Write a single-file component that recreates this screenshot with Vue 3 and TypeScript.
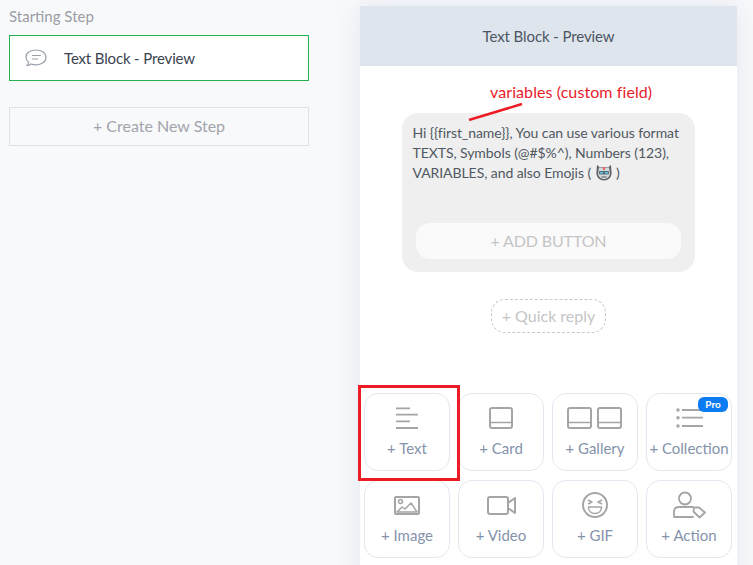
<script setup lang="ts">
interface Tile { label: string; icon: string; pro?: boolean }
const variable = '{' + '{first_name}' + '}'
const tiles: Tile[] = [
  { label: '+ Text', icon: 'text' },
  { label: '+ Card', icon: 'card' },
  { label: '+ Gallery', icon: 'gallery' },
  { label: '+ Collection', icon: 'collection', pro: true },
  { label: '+ Image', icon: 'image' },
  { label: '+ Video', icon: 'video' },
  { label: '+ GIF', icon: 'gif' },
  { label: '+ Action', icon: 'action' },
]
</script>

<template>
  <div class="page">
    <aside class="left">
      <div class="title">Starting Step</div>
      <div class="step">
        <svg class="chat" width="24" height="20" viewBox="0 0 24 20" fill="none" stroke="#9aa1ab" stroke-width="1.2">
          <path d="M3 17.5c1.5 0 3-.4 4-1.5 1.2.5 3 .8 5 .8 5.500 0 10-2.800 10-7.300S17.500 2 12 2 2 4.500 2 9c0 2.500 1 4 2.600 5.200-.2 1.400-.8 2.500-1.600 3.300z" />
          <path d="M8 7.500h9M8 11h6" />
        </svg>
        <span>Text Block - Preview</span>
      </div>
      <div class="create">+ Create New Step</div>
    </aside>
    <main class="panel">
      <div class="head">Text Block - Preview</div>
      <div class="body">
        <div class="note">variables (custom field)</div>
        <svg class="note-line" width="60" height="20" viewBox="0 0 60 20"><path d="M1 19 L54 3" stroke="#ed1c24" stroke-width="2.500" fill="none" /></svg>
        <div class="bubble">
          <p class="msg">Hi {{ variable }}, You can use various format TEXTS, Symbols (@#$%^), Numbers (123), VARIABLES, and also Emojis (
            <svg class="emoji" width="18" height="17" viewBox="0 0 18 17">
              <path d="M2 1l2.500 2h9L16 1l.6 8c0 4.500-3.400 7.500-7.600 7.500S1.400 13.500 1.400 9z" fill="#5d6268"/>
              <path d="M4 3.500h10l1 5.500c0 3.500-2.800 6-6 6s-6-2.500-6-6z" fill="#d5d9dc"/>
              <rect x="4" y="7" width="10" height="3.500" rx="1" fill="#4c6c7c"/>
              <rect x="5" y="8" width="3" height="1.600" fill="#6fc4da"/><rect x="10" y="8" width="3" height="1.600" fill="#6fc4da"/>
              <rect x="6.500" y="12.200" width="5" height="1.500" fill="#7d8388"/>
              <rect x="8" y="3" width="2" height="3" fill="#e0655a"/>
            </svg>
            )</p>
          <div class="add">+ ADD BUTTON</div>
        </div>
        <div class="quick">+ Quick reply</div>
      </div>
      <div class="grid">
        <div v-for="t in tiles" :key="t.label" class="tile">
          <span v-if="t.pro" class="pro">Pro</span>
          <svg class="icon" width="44" height="32" viewBox="0 0 44 32" fill="none" stroke="#a5a5a5" stroke-width="1.500">
            <template v-if="t.icon === 'text'">
              <path d="M11 6.300h14M11 12.700h22M11 19.300h14M11 26h22" stroke-width="1.800" />
            </template>
            <template v-else-if="t.icon === 'card'">
              <rect x="11" y="6" width="22" height="20" rx="2" stroke-width="2" /><path d="M11 20.500h22" />
            </template>
            <template v-else-if="t.icon === 'gallery'">
              <rect x="-5" y="6" width="23" height="20" rx="2" stroke-width="2" /><path d="M-5 20.500h23" />
              <rect x="25" y="6" width="23" height="20" rx="2" stroke-width="2" /><path d="M25 20.500h23" />
            </template>
            <template v-else-if="t.icon === 'collection'">
              <path d="M15 8h21M15 15.700h21M15 24h21" stroke-width="1.800" />
              <circle cx="11" cy="8" r="1.700" fill="#a5a5a5" stroke="none" /><circle cx="11" cy="15.700" r="1.700" fill="#a5a5a5" stroke="none" /><circle cx="11" cy="24" r="1.700" fill="#a5a5a5" stroke="none" />
            </template>
            <template v-else-if="t.icon === 'image'">
              <rect x="10" y="8" width="24" height="17" rx="1" stroke-width="2" />
              <circle cx="15.500" cy="12.500" r="2" /><path d="M12 23l5-5 3 2 6-6 6 9z" stroke-linejoin="round" />
            </template>
            <template v-else-if="t.icon === 'video'">
              <rect x="9" y="8" width="20" height="17" rx="2" stroke-width="2" /><path d="M29 14l7-5v15l-7-5z" stroke-width="2" stroke-linejoin="round" />
            </template>
            <template v-else-if="t.icon === 'gif'">
              <circle cx="22" cy="16" r="12" stroke-width="2" />
              <path d="M15 11l4 2-4 2M29 11l-4 2 4 2M15.500 18h13c0 4-2.800 6.500-6.500 6.500s-6.500-2.500-6.500-6.500z" stroke-linejoin="round" />
            </template>
            <template v-else>
              <circle cx="18" cy="9.500" r="6" stroke-width="1.800" />
              <path d="M7 28v-5c0-3 2-5 5-5h14M7 28h19" stroke-width="1.800" stroke-linecap="round" />
              <path d="M27 18.500h5l6 5-5.500 5-6-6z" stroke-width="1.800" stroke-linejoin="round" fill="#fff" />
            </template>
          </svg>
          <span class="lab">{{ t.label }}</span>
        </div>
      </div>
      <div class="mark"></div>
    </main>
  </div>
</template>

<style>
html, body { margin: 0; background: #f8f9fb; }
</style>

<style scoped>
.page {
  width: 753px;
  height: 565px;
  overflow: hidden;
  display: flex;
  font-family: Lato, sans-serif;
  background: #f8f9fb;
}
.left {
  width: 360px;
  box-sizing: border-box;
  padding: 8px 0 0 9px;
}
.title { font-size: 15px; line-height: 17px; color: #9b9ca5; }
.step {
  margin-top: 10px;
  width: 300px;
  height: 46px;
  box-sizing: border-box;
  border: 1px solid #22b14c;
  background: #fff;
  display: flex;
  align-items: center;
  padding-left: 14px;
  gap: 16px;
  font-size: 15px;
  letter-spacing: -0.15px;
  color: #3a4450;
}
.create {
  margin-top: 26px;
  width: 300px;
  height: 39px;
  box-sizing: border-box;
  border: 1px solid #dfe1e6;
  text-align: center;
  line-height: 36px;
  font-size: 16px;
  color: #a2a4ac;
}
.panel {
  position: relative;
  width: 377px;
  height: 600px;
  margin-top: 6px;
  background: #fff;
  box-shadow: 0 0 24px rgba(160, 170, 200, 0.24);
}
.head {
  height: 60px;
  background: #dfe5ec;
  text-align: center;
  line-height: 61px;
  font-size: 15px;
  letter-spacing: -0.1px;
  color: #4b5563;
}
.body { position: relative; height: 327px; box-sizing: border-box; padding: 47px 42px 0; }
.note { position: absolute; left: 130px; top: 16px; font-size: 16px; letter-spacing: 0.09px; line-height: 20px; color: #e8202a; }
.note-line { position: absolute; left: 108px; top: 35px; }
.bubble {
  width: 293px;
  height: 159px;
  box-sizing: border-box;
  background: #efefef;
  border-radius: 16px;
  padding: 10px 11px 13px 11px;
  display: flex;
  flex-direction: column;
  justify-content: space-between;
}
.msg { margin: 0 0 0 -0.5px; font-size: 14px; letter-spacing: -0.07px; line-height: 20px; color: #4f5862; }
.emoji { vertical-align: -3px; }
.add {
  margin: 0 3px;
  height: 36px;
  border-radius: 14px;
  background: #fafafa;
  text-align: center;
  line-height: 36px;
  font-size: 16px;
  letter-spacing: -0.15px;
  color: #c5c5c7;
}
.quick {
  margin: 27px auto 0;
  width: 115px;
  height: 34px;
  box-sizing: border-box;
  border: 1px dashed #c8c8c8;
  border-radius: 14px;
  text-align: center;
  line-height: 32px;
  font-size: 16px;
  color: #c5c5c7;
}
.grid {
  padding-left: 4px;
  display: grid;
  grid-template-columns: repeat(4, 86px);
  grid-auto-rows: 78px;
  column-gap: 8px;
  row-gap: 9px;
}
.tile {
  position: relative;
  box-sizing: border-box;
  border: 1px solid #e3e8f0;
  border-radius: 14px;
  background: #fff;
  display: flex;
  flex-direction: column;
  align-items: center;
  padding-top: 8px;
}
.icon { display: block; overflow: visible; }
.lab { margin-top: 4px; font-size: 15px; line-height: 20px; color: #8493aa; white-space: nowrap; }
.pro {
  position: absolute;
  right: 3px;
  top: 3px;
  width: 30px;
  height: 15px;
  background: #0d7cf2;
  border-radius: 6px;
  color: #fff;
  font-size: 10px;
  font-weight: 700;
  text-align: center;
  line-height: 15px;
  z-index: 1;
}
.mark {
  position: absolute;
  left: -2px;
  top: 379px;
  width: 102px;
  height: 96px;
  box-sizing: border-box;
  border: 3px solid #ed1c24;
}
</style>
